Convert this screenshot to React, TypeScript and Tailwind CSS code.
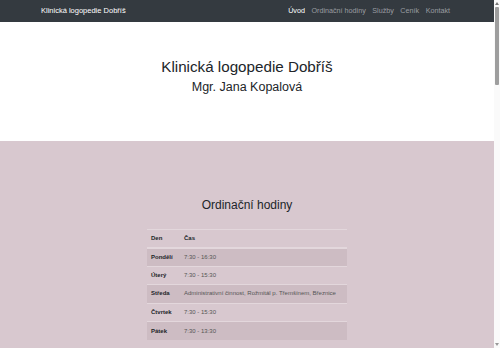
import React from "react";

const rows: [string, string][] = [
  ["Pondělí", "7:30 - 16:30"],
  ["Úterý", "7:30 - 15:30"],
  ["Středa", "Administrativní činnost, Rožmitál p. Třemšínem, Březnice"],
  ["Čtvrtek", "7:30 - 15:30"],
  ["Pátek", "7:30 - 13:30"],
];

export default function App() {
  return (
    <div className="flex w-full h-[348px] overflow-hidden" style={{ fontFamily: '"Liberation Sans", Arial, sans-serif' }}>
      <div className="flex-1 min-w-0 text-[#212529]">
        <nav className="h-[22px] bg-[#343a40] flex items-center pl-[41px] pr-[44px] justify-between">
          <span className="text-[7.5px] text-white">Klinická logopedie Dobříš</span>
          <div className="flex gap-[6.5px] text-[7.2px] text-[#9a9da0]">
            <span className="text-white">Úvod</span>
            <span>Ordinační hodiny</span>
            <span>Služby</span>
            <span>Ceník</span>
            <span>Kontakt</span>
          </div>
        </nav>
        <header className="h-[119px] bg-white flex flex-col items-center pt-[35px]">
          <h1 className="text-[15.2px] leading-[20px]">Klinická logopedie Dobříš</h1>
          <h2 className="text-[12.5px] leading-[16px] mt-[2px]">Mgr. Jana Kopalová</h2>
        </header>
        <section className="bg-[#d8c8cf] min-h-[400px] flex flex-col items-center pt-[55px]">
          <h2 className="text-[12px] leading-[18px]">Ordinační hodiny</h2>
          <table className="mt-[15px] w-[200px] text-[6px] border-t border-[#e3d7dc]">
            <thead>
              <tr className="border-b-2 border-[#e3d7dc]">
                <th className="text-left font-bold h-[18px] pl-[4px] w-[33px]">Den</th>
                <th className="text-left font-bold pl-[4px]">Čas</th>
              </tr>
            </thead>
            <tbody>
              {rows.map(([d, t], i) => (
                <tr key={d} className={(i % 2 === 0 ? "bg-[#cdbcc3]" : "") + " border-t border-[#e3d7dc]"}>
                  <td className="font-bold h-[18.5px] pl-[4px]">{d}</td>
                  <td className="pl-[4px] text-[#555]">{t}</td>
                </tr>
              ))}
            </tbody>
          </table>
        </section>
      </div>
      <div className="w-[6px] h-[348px] bg-[#fafafa] flex flex-col items-center shrink-0">
        <div className="mt-[2px] w-0 h-0 border-l-[2px] border-r-[2px] border-b-[3px] border-l-transparent border-r-transparent border-b-[#777]" />
        <div className="mt-[2px] w-[4px] h-[78px] bg-[#9e9e9e] rounded-[1px]" />
        <div className="flex-1" />
        <div className="mb-[2px] w-0 h-0 border-l-[2px] border-r-[2px] border-t-[3px] border-l-transparent border-r-transparent border-t-[#999]" />
      </div>
    </div>
  );
}
